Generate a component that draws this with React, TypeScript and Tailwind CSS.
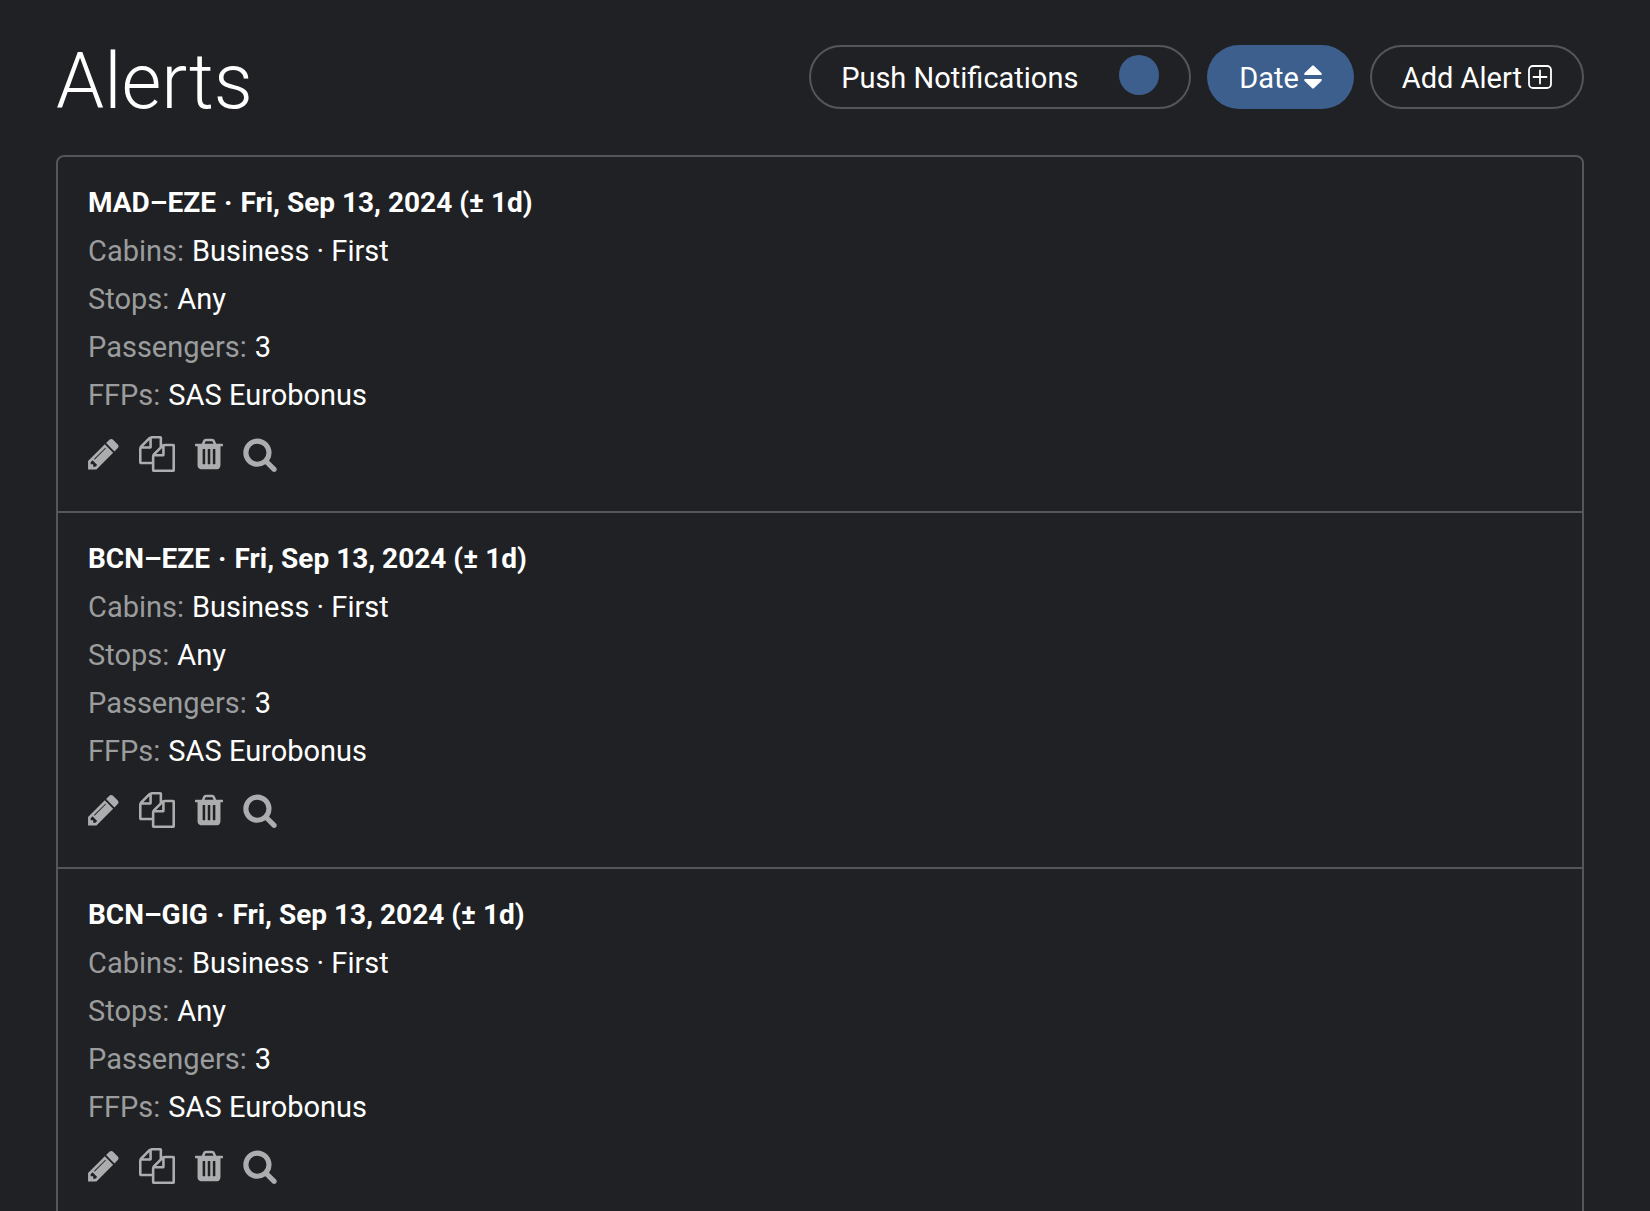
import { useState } from 'react';

type Glyph = { label: string; viewBox: string; size: string; d: string };

const actions: Glyph[] = [
  {
    label: 'Edit alert',
    viewBox: '128 0 1536 1792',
    size: 'h-9 w-[31px]',
    d: 'M491 1536l91-91-235-235-91 91v107h128v128h107zm523-928q0-22-22-22-10 0-17 7l-542 542q-7 7-7 17 0 22 22 22 10 0 17-7l542-542q7-7 7-17zm-54-192l416 416-832 832H128v-416zm683 96q0 53-37 90l-166 166-416-416 166-165q36-38 90-38 53 0 91 38l235 234q37 39 37 91z',
  },
  {
    label: 'Duplicate alert',
    viewBox: '0 0 1792 1792',
    size: 'size-9',
    d: 'M1696 384q40 0 68 28t28 68v1216q0 40-28 68t-68 28H736q-40 0-68-28t-28-68v-288H96q-40 0-68-28t-28-68V640q0-40 20-88t48-76L476 68q28-28 76-48t88-20h416q40 0 68 28t28 68v328q68-40 128-40h416zm-544 213L853 896h299V597zM512 213L213 512h299V213zm196 647l316-316V128H640v416q0 40-28 68t-68 28H128v640h512v-256q0-40 20-88t48-76zm956 804V512h-384v416q0 40-28 68t-68 28H768v640h896z',
  },
  {
    label: 'Delete alert',
    viewBox: '192 0 1408 1792',
    size: 'h-9 w-7',
    d: 'M704 1376V672q0-14-9-23t-23-9h-64q-14 0-23 9t-9 23v704q0 14 9 23t23 9h64q14 0 23-9t9-23zm256 0V672q0-14-9-23t-23-9h-64q-14 0-23 9t-9 23v704q0 14 9 23t23 9h64q14 0 23-9t9-23zm256 0V672q0-14-9-23t-23-9h-64q-14 0-23 9t-9 23v704q0 14 9 23t23 9h64q14 0 23-9t9-23zM672 384h448l-48-117q-7-9-17-11H738q-10 2-17 11zm928 32v64q0 14-9 23t-23 9h-96v948q0 83-47 143.500t-113 60.500H480q-66 0-113-58.500T320 1464V512h-96q-14 0-23-9t-9-23v-64q0-14 9-23t23-9h309l70-167q15-37 54-63t79-26h320q40 0 79 26t54 63l70 167h309q14 0 23 9t9 23z',
  },
  {
    label: 'Search flights',
    viewBox: '64 0 1664 1792',
    size: 'h-9 w-[34px]',
    d: 'M1216 832q0-185-131.500-316.500T768 384 451.500 515.500 320 832t131.500 316.500T768 1280t316.500-131.500T1216 832zm512 832q0 52-38 90t-90 38q-54 0-90-38l-343-342q-179 124-399 124-143 0-273.500-55.500t-225-150-150-225T64 832t55.500-273.500 150-225 225-150T768 128t273.500 55.500 225 150 150 225T1472 832q0 220-124 399l343 343q37 37 37 90z',
  },
];

const alerts = ['MAD–EZE', 'BCN–EZE', 'BCN–GIG'];

const details = [
  ['Cabins', 'Business · First'],
  ['Stops', 'Any'],
  ['Passengers', '3'],
  ['FFPs', 'SAS Eurobonus'],
];

function AlertCard({ route }: { route: string }) {
  return (
    <li className="border-b-2 border-[#555658] px-[30px] pt-[22px] pb-[39px]">
      <h2 className="text-[28px] leading-12 font-bold">
        {route}
        <span className="mx-2">·</span>
        Fri, Sep 13, 2024 (± 1d)
      </h2>
      <dl>
        {details.map(([name, value]) => (
          <div key={name} className="flex gap-2">
            <dt className="text-[#9b9c9d]">{name}:</dt>
            <dd>{value}</dd>
          </div>
        ))}
      </dl>
      <div className="mt-[17px] flex gap-5 text-[#acadae]">
        {actions.map((a) => (
          <button key={a.label} type="button" aria-label={a.label}>
            <svg viewBox={a.viewBox} className={a.size} fill="currentColor" aria-hidden="true">
              <path d={a.d} />
            </svg>
          </button>
        ))}
      </div>
    </li>
  );
}

export default function App() {
  const [push, setPush] = useState(false);
  return (
    <main className="h-screen overflow-hidden bg-[#202124] pr-[66px] pl-14 font-['Roboto','Liberation_Sans',sans-serif] text-[29px] leading-12 text-white">
      <header className="flex items-start justify-between pt-[45px]">
        <h1 className="text-[77px] leading-[74px] font-light">Alerts</h1>
        <div className="flex gap-4">
          <label className="flex h-16 w-[382px] items-center justify-between rounded-full border-2 border-[#555658] px-[30px]">
            <span className="pt-0.5">Push Notifications</span>
            <input
              type="checkbox"
              role="switch"
              checked={push}
              onChange={(e) => setPush(e.target.checked)}
              className="mb-1 size-10 appearance-none rounded-full bg-[#3c5f8d]"
            />
          </label>
          <button type="button" className="flex h-16 items-center gap-[5px] rounded-full bg-[#3c5f8d] px-8">
            <span className="pt-0.5">Date</span>
            <svg viewBox="0 0 18 24" className="h-6 w-[18px]" fill="currentColor" aria-hidden="true">
              <path d="M8.200 .7Q9 0 9.800 .7L17.400 8Q18.400 9.700 17 10H1Q-.4 9.700 .6 8ZM.6 16Q-.4 14.300 1 14H17Q18.400 14.300 17.400 16L9.800 23.300Q9 24 8.200 23.300Z" />
            </svg>
          </button>
          <button type="button" className="flex h-16 items-center gap-1.5 rounded-full border-2 border-[#555658] px-[30px]">
            <span className="pt-0.5">Add Alert</span>
            <svg viewBox="0 0 24 24" className="size-6" fill="none" stroke="currentColor" strokeWidth="1.800" strokeLinecap="round" aria-hidden="true">
              <rect x="1" y="1" width="22" height="22" rx="4" />
              <path d="M12 5.500v13M5.500 12h13" />
            </svg>
          </button>
        </div>
      </header>
      <ul className="mt-9 rounded-lg border-2 border-[#555658]">
        {alerts.map((route) => (
          <AlertCard key={route} route={route} />
        ))}
      </ul>
    </main>
  );
}
